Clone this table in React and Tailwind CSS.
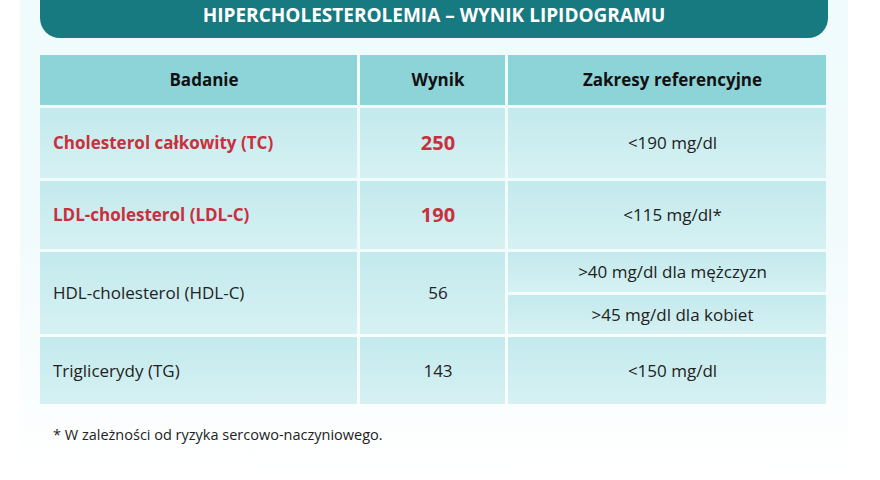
const rows = [
  { name: 'Cholesterol całkowity (TC)', value: '250', ref: ['<190 mg/dl'], high: true, h: 'h-[70px]' },
  { name: 'LDL-cholesterol (LDL-C)', value: '190', ref: ['<115 mg/dl*'], high: true, h: 'h-[68px]' },
  { name: 'HDL-cholesterol (HDL-C)', value: '56', ref: ['>40 mg/dl dla mężczyzn', '>45 mg/dl dla kobiet'], h: 'h-[82px]' },
  { name: 'Triglicerydy (TG)', value: '143', ref: ['<150 mg/dl'], h: 'h-[67px]' },
];

const cell = 'bg-gradient-to-b from-[#c3eaed] to-[#d6f1f3] flex items-center';
const head = 'h-[50px] bg-[#8dd4d9] flex items-center justify-center pl-[11px] font-bold text-[#111]';

export default function App() {
  return (
    <div className="w-[880px] h-[480px] bg-white overflow-hidden" style={{ fontFamily: '"Open Sans", "Liberation Sans", sans-serif' }}>
      <div className="mx-[20px] w-[828px] h-full bg-gradient-to-b from-[#effbfc] via-[#f2fbfc] to-white px-[20px]">
        {/* Title */}
        <div className="h-[38px] rounded-b-[20px] bg-[#177a80] flex items-center justify-center pb-[8px]">
          <h1 className="text-white font-bold text-[19px] leading-none">HIPERCHOLESTEROLEMIA – WYNIK LIPIDOGRAMU</h1>
        </div>

        {/* Table */}
        <div className="mt-[17px] w-[786px] grid grid-cols-[317px_145px_1fr] gap-[3px] text-[17px] text-[#222]">
          <div className={head}>Badanie</div>
          <div className={head}>Wynik</div>
          <div className={head}>Zakresy referencyjne</div>

          {rows.map(r => (
            <div key={r.name} className="contents">
              <div className={`${cell} ${r.h} pl-[13px] ${r.high ? 'font-bold text-[#c8303d]' : ''}`}>{r.name}</div>
              <div className={`${cell} ${r.h} justify-center pl-[11px] ${r.high ? 'font-bold text-[#c8303d] text-[20px]' : ''}`}>{r.value}</div>
              {r.ref.length === 1 ? (
                <div className={`${cell} ${r.h} justify-center pl-[11px]`}>{r.ref[0]}</div>
              ) : (
                <div className={`${r.h} flex flex-col gap-[3px]`}>
                  {r.ref.map(t => (
                    <div key={t} className={`${cell} flex-1 justify-center pl-[11px]`}>{t}</div>
                  ))}
                </div>
              )}
            </div>
          ))}
        </div>

        <p className="mt-[20px] pl-[13px] text-[14.5px] text-[#222]">* W zależności od ryzyka sercowo-naczyniowego.</p>
      </div>
    </div>
  );
}
